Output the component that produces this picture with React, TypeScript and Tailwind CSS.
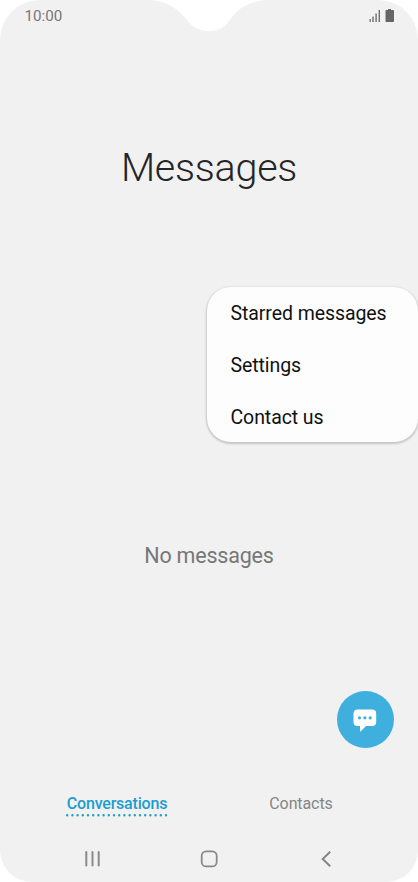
import React from "react";

const menuItems = ["Starred messages", "Settings", "Contact us"];

function StatusBar() {
  return (
    <header className="relative flex h-8 shrink-0 items-start justify-between pl-[24.500px] pr-[24px]">
      <svg className="absolute left-[150px] top-0" width="118" height="32" viewBox="0 0 118 32" fill="#fff" aria-hidden="true">
        <path d="M0 0C17 1 28 9 37 20C42 27 49 31 59 31C69 31 75 27 80 20C87 9 98 1 118 0Z" />
      </svg>
      <span className="mt-[6px] text-[15.200px] leading-5 text-[#777]">10:00</span>
      <div className="mt-[9px] flex items-end gap-[4px]">
        <svg width="12" height="13" viewBox="0 0 12 13" fill="#6e6e6e" aria-hidden="true">
          <path d="M.5 10h1.300v3H.5zM3.300 7.500h1.400V13H3.300zM6.400 4.500h1.400V13H6.400zM9.600 1H11v12H9.600z" />
        </svg>
        <svg width="9" height="13" viewBox="0 0 9 13" fill="#666" aria-hidden="true">
          <path d="M3 0h3v1h2.200q.8 0 .8.8v10.400q0 .8-.8.8H1.300q-.8 0-.8-.8V1.800Q.5 1 1.300 1H3z" />
        </svg>
      </div>
    </header>
  );
}

function OverflowMenu() {
  return (
    <ul className="ml-[207px] flex h-[155px] w-[210.500px] flex-col rounded-[24px] bg-[#fdfdfd] pl-[23.500px] pt-px text-[19.500px] tracking-[-0.080px] text-[#111] shadow-[0_1px_2px_1px_rgba(0,0,0,0.18)]">
      {menuItems.map((item) => (
        <li key={item} className="flex h-[52px] shrink-0 items-center whitespace-nowrap">{item}</li>
      ))}
    </ul>
  );
}

export default function App() {
  return (
    <div className="h-[882px] w-[418px] overflow-hidden bg-white font-['Roboto',sans-serif]">
      <main className="flex h-full flex-col overflow-hidden rounded-t-[40px] rounded-b-[32px] bg-[#f1f1f1]">
        <StatusBar />
        <h1 className="mt-[111px] h-[50px] text-center text-[39.500px] font-light leading-[50px] tracking-[-0.250px] text-[#252525]">Messages</h1>
        <div className="mt-[94px]">
          <OverflowMenu />
        </div>
        <p className="mt-[99px] h-[30px] text-center text-[21.500px] leading-[30px] tracking-[-0.200px] text-[#777]">No messages</p>
        <button className="ml-[336.500px] mt-[120px] flex size-[57px] shrink-0 items-center justify-center rounded-full bg-[#3fb0dd]" aria-label="New message">
          <svg width="24" height="24" viewBox="0 0 24 24" aria-hidden="true">
            <path d="M4 1.500h15.200a4 4 0 0 1 4 4v8.500a4 4 0 0 1-4 4H13L7.800 23.200q-.8.7-.8-.5V18H4.500a4 4 0 0 1-4-4V5.500A4 4 0 0 1 4 1.500z" fill="#fff" />
            <g fill="#3fb0dd"><circle cx="6.500" cy="9.800" r="1.600" /><circle cx="11.900" cy="9.800" r="1.600" /><circle cx="17.200" cy="9.800" r="1.600" /></g>
          </svg>
        </button>
        <nav className="mt-[46px] flex h-[24px] text-[16px] leading-5">
          <div className="ml-[66px] w-[102px] text-center font-medium tracking-[-0.200px] text-[#1b9dce]">
            <div className="whitespace-nowrap">Conversations</div>
            <svg className="-mt-px block" width="102" height="4" viewBox="0 0 102 4" aria-hidden="true">
              <path d="M1.200 2.200H101" stroke="#1b9dce" strokeWidth="2.400" strokeLinecap="round" strokeDasharray="0 5.200" />
            </svg>
          </div>
          <div className="ml-[101px] w-[64px] text-center tracking-[-0.100px] text-[#858585]">Contacts</div>
        </nav>
        <nav className="mt-[31px] flex h-[20px] items-center pl-[84px]">
          <svg width="18" height="18" viewBox="0 0 18 18" fill="none" stroke="#8a8a8a" strokeWidth="2" strokeLinecap="round" aria-label="Recent apps">
            <path d="M2.300 2v13.500M8.500 2v13.500M14.700 2v13.500" />
          </svg>
          <svg className="ml-[98px]" width="18" height="18" viewBox="0 0 18 18" fill="none" stroke="#888" strokeWidth="1.800" aria-label="Home">
            <rect x="1.700" y="1.400" width="15" height="15" rx="4.500" />
          </svg>
          <svg className="ml-[103px]" width="10" height="18" viewBox="0 0 10 18" fill="none" stroke="#858585" strokeWidth="2" aria-label="Back">
            <path d="M9.200 1.800L1.700 9l7.500 7.200" />
          </svg>
        </nav>
      </main>
    </div>
  );
}
